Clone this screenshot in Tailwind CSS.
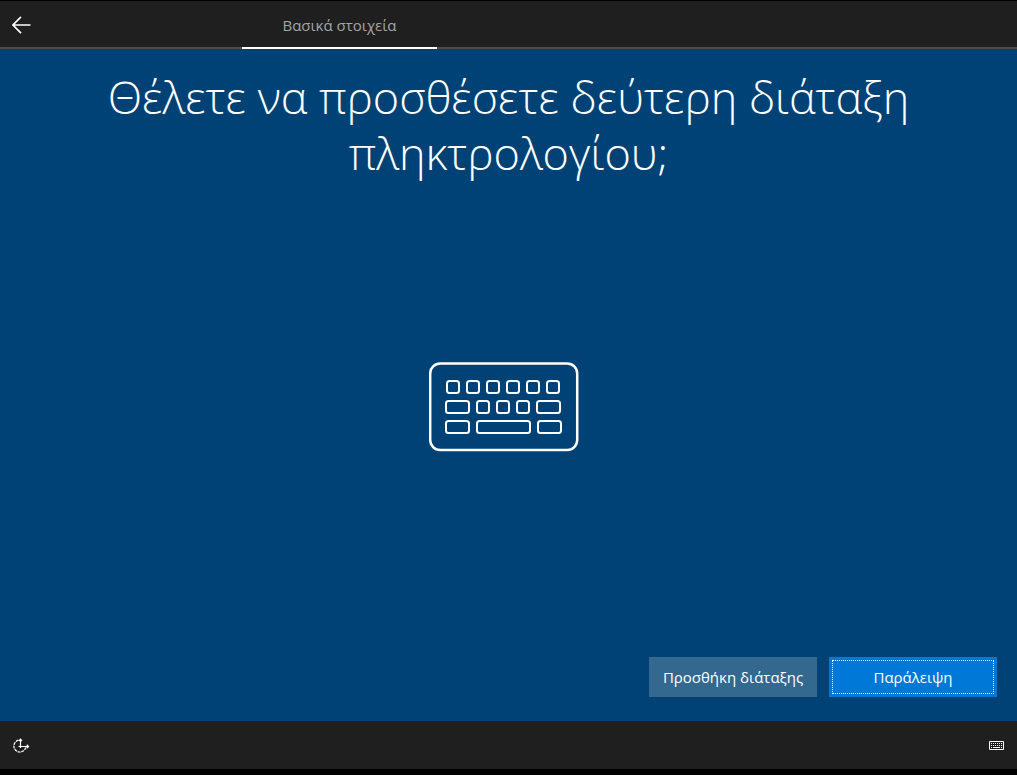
<!DOCTYPE html>
<html lang="el">
<head>
<meta charset="utf-8">
<meta name="viewport" content="width=device-width, initial-scale=1">
<title>Βασικά στοιχεία</title>
<script src="https://cdn.jsdelivr.net/npm/@tailwindcss/browser@4"></script>
</head>
<body class="flex min-h-screen flex-col bg-[#004275] font-['Open_Sans','Noto_Sans',sans-serif] text-white">
  <header class="grid h-[49px] grid-cols-[242px_195px_1fr] border-t border-black bg-[#1f1f1f]">
    <div class="flex items-center border-b-2 border-[#4c4c4c] pt-0.5 pl-3">
      <button type="button" aria-label="Πίσω" class="block">
        <svg width="20" height="18" viewBox="0 0 20 18" fill="none" stroke="#fff" stroke-width="1.700"><path d="M18.500 9H1M9 .800L.900 9L9 17.200"/></svg>
      </button>
    </div>
    <nav class="flex border-b-2 border-white">
      <a href="#" aria-current="step" class="flex flex-1 items-center justify-center pt-0.5 text-[15px] leading-5 text-[#a5a5a5]">Βασικά στοιχεία</a>
    </nav>
    <div class="border-b-2 border-[#4c4c4c]"></div>
  </header>
  <main class="flex flex-1 flex-col">
    <h1 class="mx-auto max-w-[860px] pt-5 text-center text-[45px] leading-[56px] font-light">Θέλετε να προσθέσετε δεύτερη διάταξη πληκτρολογίου;</h1>
    <div class="flex flex-1 items-center justify-center pr-2.5 pb-6">
      <svg width="150" height="90" viewBox="0 0 150 90" fill="none" stroke="#fff" stroke-width="2" role="img" aria-label="Πληκτρολόγιο">
        <rect x="1.200" y="1.500" width="147" height="86.500" rx="10" stroke-width="2.500"/>
        <g>
          <rect x="18" y="19" width="12" height="12" rx="2.500"/><rect x="38" y="19" width="12" height="12" rx="2.500"/><rect x="58" y="19" width="12" height="12" rx="2.500"/><rect x="78" y="19" width="12" height="12" rx="2.500"/><rect x="98" y="19" width="12" height="12" rx="2.500"/><rect x="118" y="19" width="12" height="12" rx="2.500"/>
          <rect x="17" y="39" width="23" height="12" rx="2.500"/><rect x="48" y="39" width="12" height="12" rx="2.500"/><rect x="68" y="39" width="12" height="12" rx="2.500"/><rect x="88" y="39" width="12" height="12" rx="2.500"/><rect x="108" y="39" width="23" height="12" rx="2.500"/>
          <rect x="17" y="59" width="23" height="12" rx="2.500"/><rect x="48" y="59" width="53" height="12" rx="2.500"/><rect x="109" y="59" width="23" height="12" rx="2.500"/>
        </g>
      </svg>
    </div>
    <div class="flex justify-end gap-3 pr-5 pb-6">
      <button type="button" class="h-10 w-[168px] bg-[#33688f] text-[15px] leading-5 whitespace-nowrap">Προσθήκη διάταξης</button>
      <button type="button" class="h-10 w-[168px] bg-[#0078d7] p-[3px] text-[15px] leading-5"><span class="flex h-full items-center justify-center border border-dotted border-white">Παράλειψη</span></button>
    </div>
  </main>
  <footer class="flex h-[54px] items-center justify-between border-b-6 border-black bg-[#1f1f1f] px-3 pt-0.5">
    <button type="button" aria-label="Διευκόλυνση πρόσβασης">
      <svg class="block" width="18" height="16" viewBox="0 0 18 16" fill="none" stroke="#fff" stroke-width="1.200"><path d="M6.500 2.200A6 6 0 1 0 13.700 9.500" stroke-dasharray="3 .7"/><path d="M8.500 1V8.500H16.500M6.800 3L8.500 1.200L10 3M14.700 6.800L16.500 8.500L14.700 10.200M6.500 8.500H8.500V10"/></svg>
    </button>
    <button type="button" aria-label="Πληκτρολόγιο οθόνης">
      <svg class="block" width="17" height="10" viewBox="0 0 17 10" fill="none" stroke="#fff"><path d="M1.500 .500H15.500V8.500H1.500Z"/><path d="M3 2.500H14M3 4.500H14" stroke-dasharray="1 1"/><path d="M3 6.500H4M5 6.500H12M13 6.500H14"/></svg>
    </button>
  </footer>
</body>
</html>
